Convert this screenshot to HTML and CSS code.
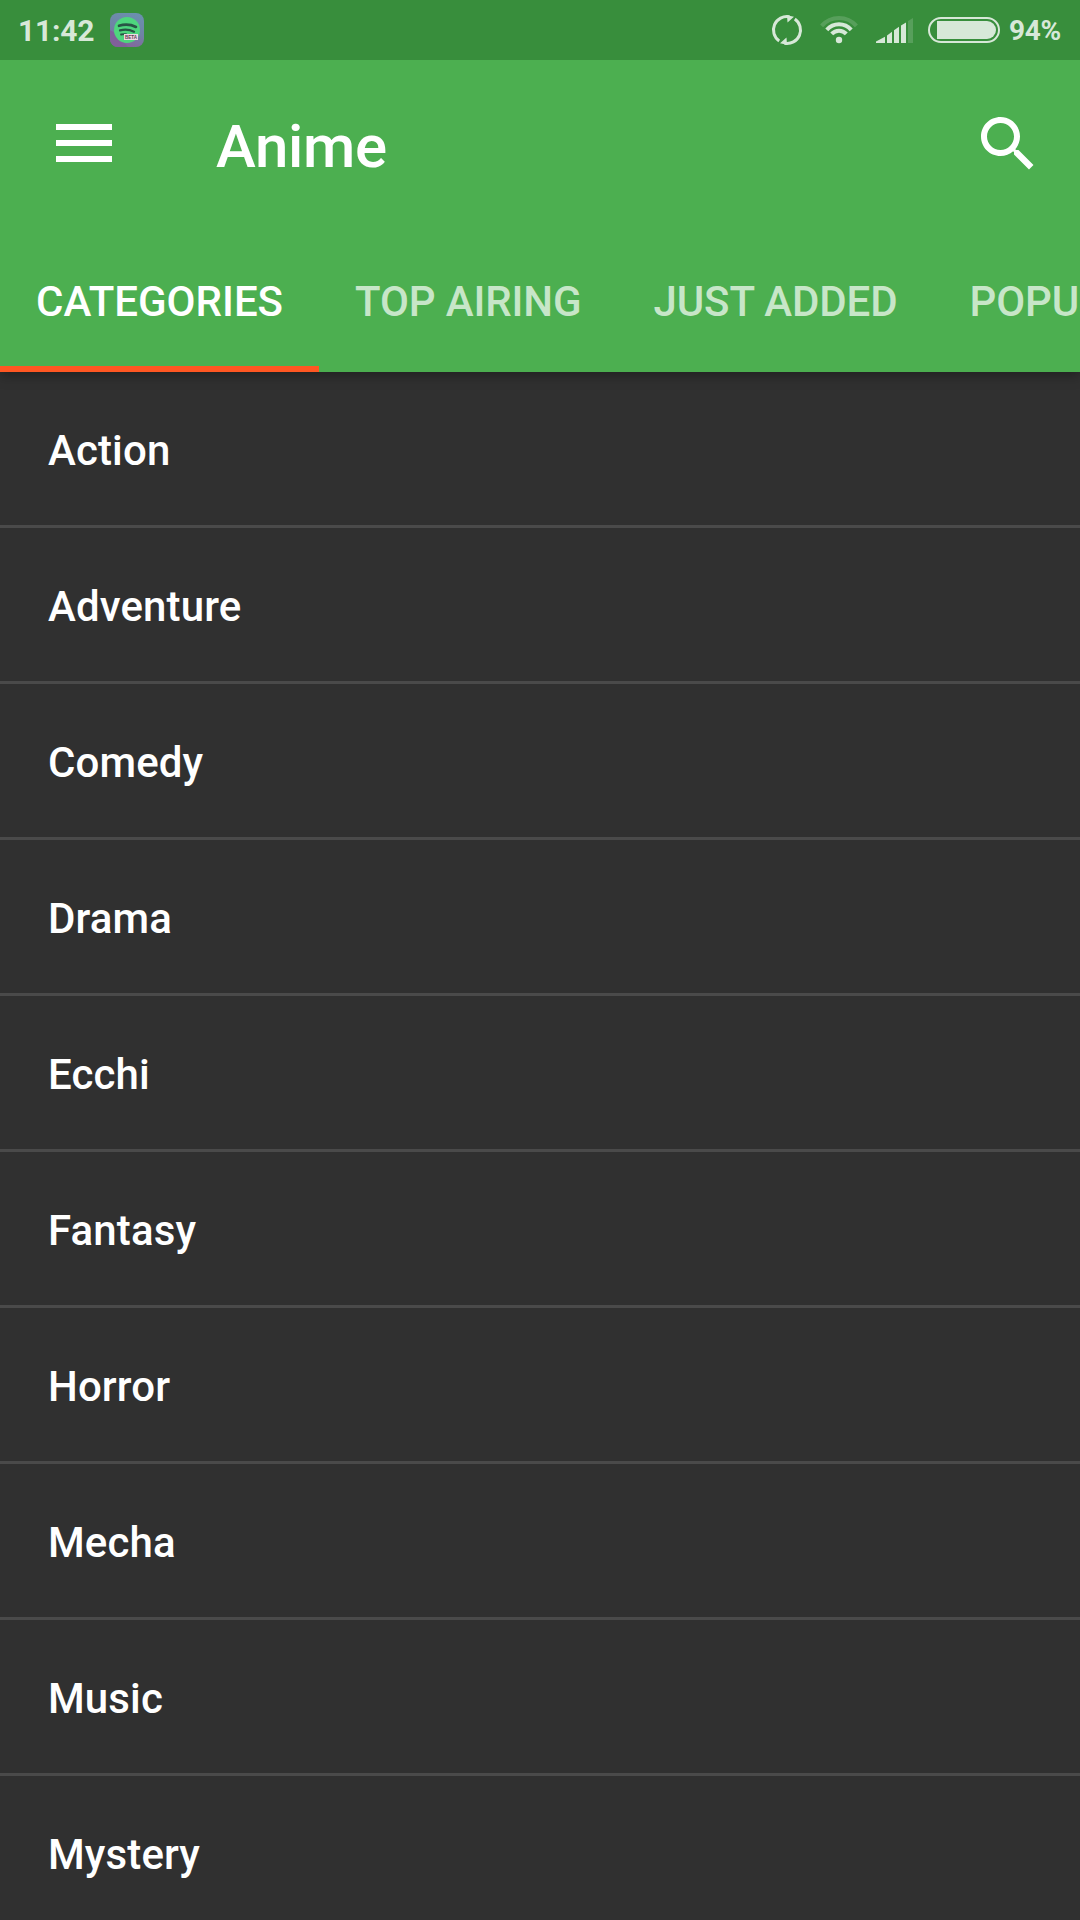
FILE: index.html
```html
<!DOCTYPE html>
<html lang="en">
<head>
<meta charset="utf-8">
<title>Anime</title>
<link rel="stylesheet" href="styles.css">
</head>
<body>
<div class="screen">
  <header class="header">
    <div class="status">
      <span class="clock">11:42</span>
      <svg class="app" viewBox="0 0 34 34" width="34" height="34">
        <defs>
          <linearGradient id="tile" x1="0.6" y1="0" x2="0.3" y2="1">
            <stop offset="0" stop-color="#6b8fae"/>
            <stop offset="0.5" stop-color="#6f83a5"/>
            <stop offset="1" stop-color="#87619b"/>
          </linearGradient>
        </defs>
        <rect width="34" height="34" rx="8" fill="url(#tile)"/>
        <path d="M0 17 8 22 18 34H8a8 8 0 0 1-8-8z" fill="#80609a"/>
        <circle cx="17" cy="17" r="13" fill="#4ed67e"/>
        <g fill="none" stroke="#285545" stroke-linecap="round">
          <path d="M9 12.800q9-2.800 17 1.200" stroke-width="2.600"/>
          <path d="M10 17.400q7.500-2 14 1.300" stroke-width="2.200"/>
          <path d="M11 21.500q3-.7 5-.3" stroke-width="1.800"/>
        </g>
        <rect x="14" y="21" width="14" height="6" fill="#efd9e4"/>
        <text class="badge" x="21" y="26.200" text-anchor="middle" textLength="12" lengthAdjust="spacingAndGlyphs">BETA</text>
      </svg>
      <div class="indicators">
        <svg class="sync" viewBox="0 0 32 32" width="32" height="32">
          <g fill="none" stroke="currentColor" stroke-width="3">
            <path d="M8.200 27A13.500 13.500 0 0 1 18.500 2.700"/>
            <path d="M23.800 5A13.500 13.500 0 0 1 13.500 29.300"/>
          </g>
          <path d="M16 1.200 23 2.700 16.500 8.600zM16 30.800 9 29.300 15.500 23.400z" fill="currentColor"/>
        </svg>
        <svg class="wifi" viewBox="0 0 40 30" width="40" height="30">
          <g fill="none" stroke="currentColor" stroke-width="4">
            <path d="M2.600 10.900A23 23 0 0 1 37.400 10.900" opacity=".2"/>
            <path d="M7.800 14.800A16.400 16.400 0 0 1 32.200 14.800"/>
            <path d="M12.700 18.900A10 10 0 0 1 27.300 18.900"/>
          </g>
          <circle cx="20" cy="25" r="3.200" fill="currentColor"/>
        </svg>
        <svg class="signal" viewBox="0 0 38 26" width="38" height="26" fill="currentColor">
          <path d="M1 23.500 10 18.700V25H1zM12 17.500 17 13.700V25H12zM19 12.200 24 8.700V25H19zM26 7.500 31 4.500V25H26z"/>
          <path d="M33 3 38 0V25H33z" opacity=".2"/>
        </svg>
        <svg class="battery" viewBox="0 0 72 26" width="72" height="26">
          <rect x="1" y="1" width="70" height="24" rx="12" fill="none" stroke="currentColor" stroke-width="2"/>
          <path d="M9 4H59a9 9 0 0 1 0 18H9z" fill="currentColor"/>
        </svg>
        <span class="percent">94%</span>
      </div>
    </div>
    <div class="toolbar">
      <div class="menu"><i></i><i></i><i></i></div>
      <h1 class="title">Anime</h1>
      <svg class="search" viewBox="0 0 24 24" width="72" height="72"><path fill="#fff" d="M15.500 14h-.79l-.28-.27C15.410 12.590 16 11.110 16 9.500 16 5.910 13.090 3 9.500 3S3 5.910 3 9.500 5.910 16 9.500 16c1.610 0 3.090-.59 4.230-1.570l.27.28v.79l5 4.990L20.490 19l-4.990-5zm-6 0C7.010 14 5 11.990 5 9.500S7.010 5 9.500 5 14 7.010 14 9.500 11.990 14 9.500 14z"/></svg>
    </div>
    <nav class="tabs">
      <span class="tab active">CATEGORIES</span>
      <span class="tab">TOP AIRING</span>
      <span class="tab">JUST ADDED</span>
      <span class="tab">POPULAR</span>
    </nav>
  </header>
  <ul class="list">
    <li>Action</li>
    <li>Adventure</li>
    <li>Comedy</li>
    <li>Drama</li>
    <li>Ecchi</li>
    <li>Fantasy</li>
    <li>Horror</li>
    <li>Mecha</li>
    <li>Music</li>
    <li>Mystery</li>
  </ul>
</div>
</body>
</html>
```
FILE: styles.css
```css
* { box-sizing: border-box; }
body { margin: 0; background: #303030; font-family: Roboto, sans-serif; font-weight: 500; color: #fff; }
.screen { width: 1080px; height: 1920px; overflow: hidden; display: flex; flex-direction: column; background: #303030; }
.header { position: relative; flex: none; background: #4caf50; box-shadow: 0 3px 12px rgba(0, 0, 0, .35); }
.status { height: 60px; display: flex; align-items: center; padding: 0 19px 0 18px; background: #388e3c; color: #d7e8d8; }
.clock { width: 92px; font-size: 30px; font-weight: 700; letter-spacing: -.2px; line-height: 60px; padding-top: 1px; }
.app { flex: none; }
.badge { font: 700 5.5px "Liberation Sans", sans-serif; fill: #5a3c50; }
.indicators { margin-left: auto; display: flex; align-items: center; }
.sync { margin-right: 16px; }
.wifi { margin-right: 16px; }
.signal { margin: 2px 15px 0 0; }
.percent { width: 52px; margin-left: 9px; font-size: 28px; font-weight: 700; letter-spacing: -.3px; line-height: 60px; padding-top: 1px; white-space: nowrap; }
.toolbar { height: 168px; display: flex; align-items: center; padding: 0 36px 0 56px; }
.menu { width: 56px; display: flex; flex-direction: column; gap: 10px; margin-bottom: 2px; }
.menu i { height: 6px; background: #fff; }
.title { margin: 0 auto 0 104px; padding-top: 5px; font-size: 60px; font-weight: 500; letter-spacing: -.3px; line-height: 70px; }
.tabs { height: 144px; display: flex; overflow: hidden; }
.tab { flex: none; height: 144px; padding: 3px 36px 0; font-size: 42px; line-height: 141px; letter-spacing: -.12px; color: rgba(255, 255, 255, .7); white-space: nowrap; }
.tab.active { letter-spacing: 0; color: #fff; box-shadow: inset 0 -6px #ff5722; }
.list { margin: 0; padding: 0; list-style: none; }
.list li { height: 156px; padding: 4px 48px 0; border-bottom: 3px solid #4a4a4a; font-size: 42px; line-height: 149px; letter-spacing: .12px; }
```
